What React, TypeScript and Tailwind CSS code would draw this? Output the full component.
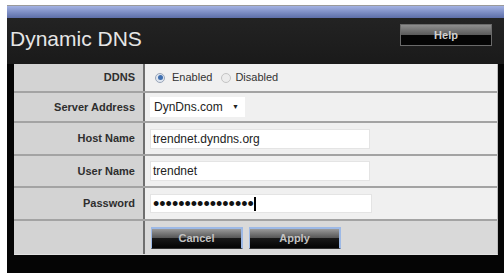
import React from "react";

const labelCls =
  "w-[131px] shrink-0 bg-[#d3d3d3] border-r-2 border-[#6f6f6f] flex items-center justify-end pr-[8px] text-[11px] font-bold text-[#2e2e2e]";

const Row = (props: { label: string; h: string; children?: React.ReactNode; last?: boolean }) => {
  return (
    <div className={`flex ${props.h} ${props.last ? "" : "border-b-2 border-[#a3a3a3]"}`}>
      <div className={labelCls}>{props.label}</div>
      <div className={`flex-1 flex items-center pl-[5px] ${props.last ? "bg-[#d9d9d9]" : "bg-[#f0f0f0]"}`}>
        {props.children}
      </div>
    </div>
  );
};

const DarkButton = (props: { text: string }) => {
  return (
    <div className="w-[92px] h-[22px] flex flex-col border-t-2 border-l border-r-2 border-[#9db9e6] border-b border-b-[#333] relative">
      <div className="h-1/2 bg-gradient-to-b from-[#9a9a9a] to-[#565656]" />
      <div className="h-1/2 bg-gradient-to-b from-[#1a1a1a] to-[#050505]" />
      <span className="absolute inset-0 flex items-center justify-center text-[11px] font-bold text-[#c2c2c2]">
        {props.text}
      </span>
    </div>
  );
};

export default function App() {
  return (
    <div
      className="w-[504px] h-[273px] bg-white pl-[7px] pt-[5px] overflow-hidden"
      style={{ fontFamily: '"Liberation Sans", Arial, sans-serif' }}
    >
      <div className="h-full bg-[#050505] flex flex-col border-t border-[#9a9a9a]">
        {/* blue bar */}
        <div className="h-[12px] bg-gradient-to-b from-[#a3b2e3] to-[#5d6ea8]" />
        {/* header */}
        <div className="h-[46px] bg-gradient-to-b from-[#232323] to-[#1a1a1a] flex items-start justify-between pl-[3px] pr-[12px]">
          <div className="text-[21px] text-[#e6e6e6] pt-[8px] leading-none mt-[2px]">Dynamic DNS</div>
          <div className="mt-[6px] w-[92px] h-[22px] flex flex-col border border-[#6a6a6a] relative">
            <div className="h-1/2 bg-gradient-to-b from-[#8e8e8e] to-[#5a5a5a]" />
            <div className="h-1/2 bg-[#050505]" />
            <span className="absolute inset-0 flex items-center justify-center text-[11px] font-bold text-[#d0d0d0]">
              Help
            </span>
          </div>
        </div>
        {/* form */}
        <div className="ml-[7px] mr-[6px] border-r border-[#bdbdbd] border-b border-b-[#e2e2e2]">
          <Row label="DDNS" h="h-[29px]">
            <div className="flex items-center text-[11px] text-[#333] pl-[5px]">
              <span className="w-[10px] h-[10px] rounded-full border border-[#9aa6b8] bg-[#dfe6f0] flex items-center justify-center">
                <span className="w-[5px] h-[5px] rounded-full bg-[#3f6fb0]" />
              </span>
              <span className="ml-[7px]">Enabled</span>
              <span className="ml-[9px] w-[10px] h-[10px] rounded-full border border-[#c4c4c4] bg-[#ececec]" />
              <span className="ml-[4px]">Disabled</span>
            </div>
          </Row>
          <Row label="Server Address" h="h-[30px]">
            <div className="w-[95px] h-[20px] bg-white flex items-center justify-between pl-[4px] pr-[6px] text-[12px] text-[#222]">
              <span>DynDns.com</span>
              <span className="text-[7px]">▼</span>
            </div>
          </Row>
          <Row label="Host Name" h="h-[33px]">
            <div className="w-[220px] h-[20px] bg-white border border-[#e4e4e4] flex items-center pl-[2px] text-[12px] text-[#222]">
              trendnet.dyndns.org
            </div>
          </Row>
          <Row label="User Name" h="h-[32px]">
            <div className="w-[220px] h-[20px] bg-white border border-[#e4e4e4] flex items-center pl-[2px] text-[12px] text-[#222]">
              trendnet
            </div>
          </Row>
          <Row label="Password" h="h-[33px]">
            <div className="w-[222px] h-[19px] bg-white border border-[#e4e4e4] flex items-center pl-[2px] text-[#111]">
              <span className="text-[18px] leading-none">••••••••••••••••</span>
              <span className="w-[2px] h-[14px] bg-black" />
            </div>
          </Row>
          <Row label="" h="h-[33px]" last>
            <div className="flex gap-[6px] pl-[1px]">
              <DarkButton text="Cancel" />
              <DarkButton text="Apply" />
            </div>
          </Row>
        </div>
      </div>
    </div>
  );
}
